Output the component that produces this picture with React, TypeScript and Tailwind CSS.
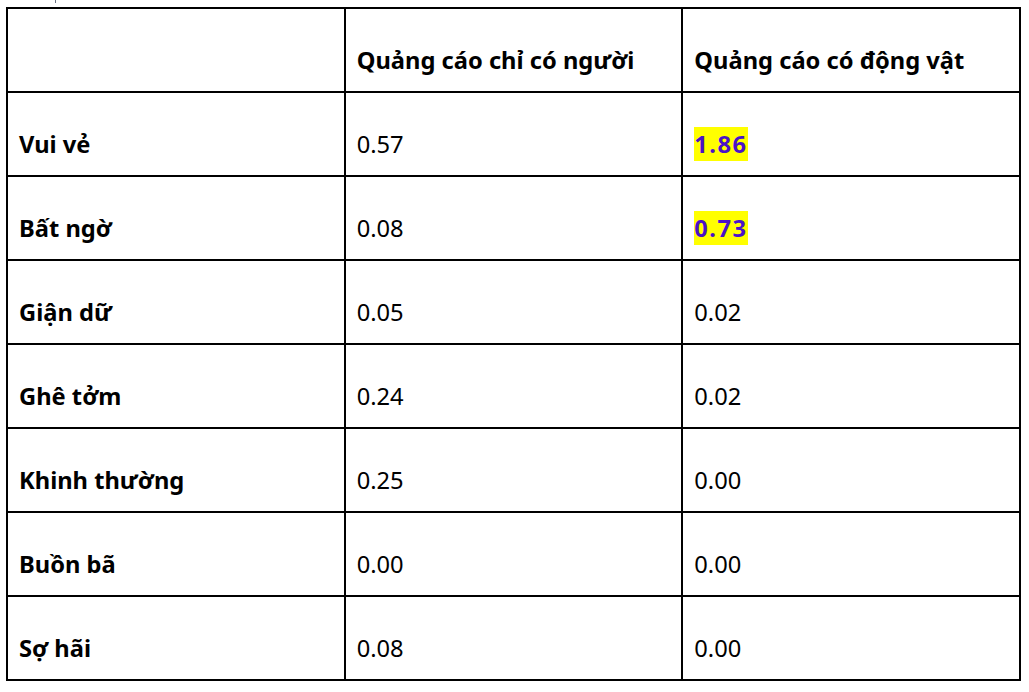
const rows: [string, string, string, boolean][] = [
  ['Vui vẻ', '0.57', '1.86', true],
  ['Bất ngờ', '0.08', '0.73', true],
  ['Giận dữ', '0.05', '0.02', false],
  ['Ghê tởm', '0.24', '0.02', false],
  ['Khinh thường', '0.25', '0.00', false],
  ['Buồn bã', '0.00', '0.00', false],
  ['Sợ hãi', '0.08', '0.00', false],
]

const cell = 'border-2 border-black px-[11px] pb-[15px] align-bottom leading-[32px]'

export default function App() {
  return (
    <div className="relative h-[692px] w-[1029px] bg-white pl-[6px] pt-[7px] text-[23.7px] text-black [font-family:'Noto_Sans',sans-serif]">
      <div className="absolute left-[55px] top-0 h-[3px] w-px bg-gray-500" />
      <table className="w-[1015px] table-fixed border-collapse">
        <tbody>
          <tr className="h-[84px]">
            <td className={cell}></td>
            <td className={`${cell} font-bold`}>Quảng cáo chỉ có người</td>
            <td className={`${cell} font-bold`}>Quảng cáo có động vật</td>
          </tr>
          {rows.map(([label, a, b, hi]) => (
            <tr key={label} className="h-[84px]">
              <td className={`${cell} font-bold`}>{label}</td>
              <td className={cell}>{a}</td>
              <td className={cell}>
                {hi ? (
                  <span className="bg-[#ffff00] py-[1px] font-bold tracking-[1.5px] text-[#4a12c8]">{b}</span>
                ) : (
                  b
                )}
              </td>
            </tr>
          ))}
        </tbody>
      </table>
    </div>
  )
}
